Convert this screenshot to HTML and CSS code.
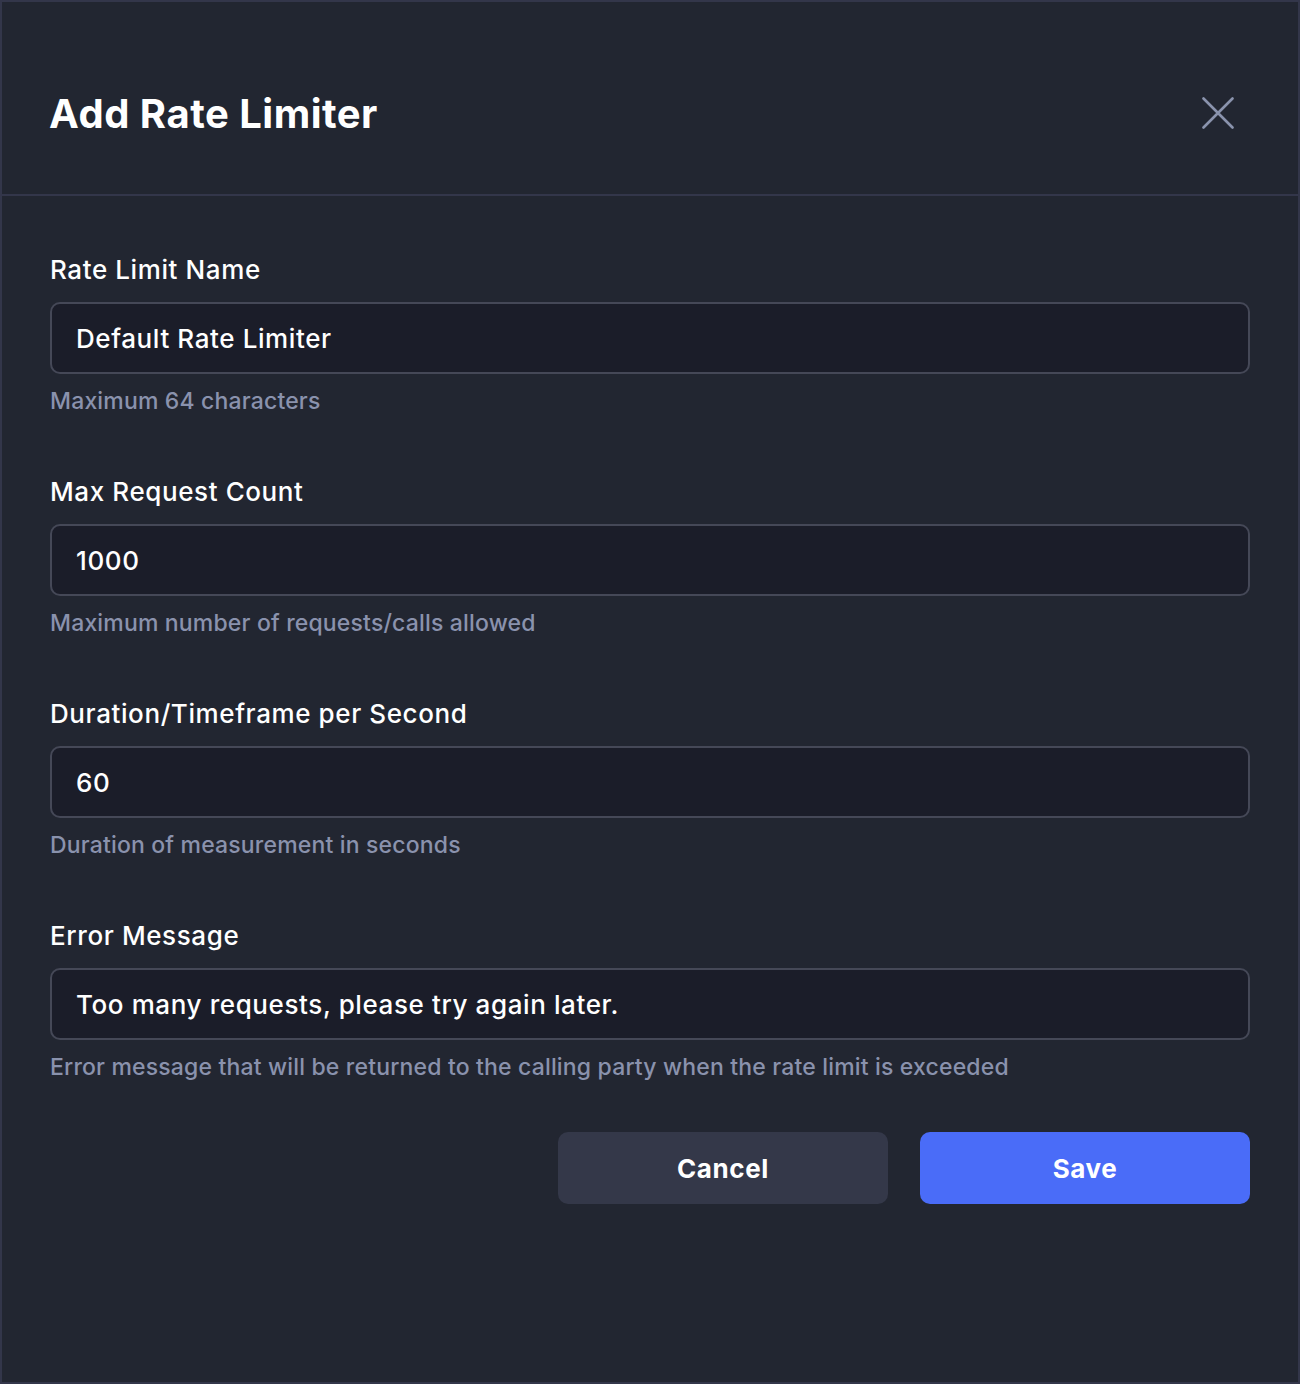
FILE: index.html
```html
<!DOCTYPE html>
<html>
<head>
<meta charset="utf-8">
<link rel="stylesheet" href="styles.css">
</head>
<body>
<div class="modal">
  <header class="header">
    <h1 class="title">Add Rate Limiter</h1>
    <button class="close" aria-label="Close">
      <svg width="32" height="32" viewBox="0 0 32 32"><path d="M1.5 1.5L30.5 30.5M30.5 1.5L1.5 30.5" stroke="#8a93ad" stroke-width="2.6" stroke-linecap="round" fill="none"/></svg>
    </button>
  </header>
  <div class="body">
    <div class="field">
      <label class="label">Rate Limit Name</label>
      <div class="input">Default Rate Limiter</div>
      <div class="hint">Maximum 64 characters</div>
    </div>
    <div class="field">
      <label class="label">Max Request Count</label>
      <div class="input">1000</div>
      <div class="hint">Maximum number of requests/calls allowed</div>
    </div>
    <div class="field">
      <label class="label">Duration/Timeframe per Second</label>
      <div class="input">60</div>
      <div class="hint">Duration of measurement in seconds</div>
    </div>
    <div class="field">
      <label class="label">Error Message</label>
      <div class="input">Too many requests, please try again later.</div>
      <div class="hint">Error message that will be returned to the calling party when the rate limit is exceeded</div>
    </div>
    <div class="actions">
      <button class="btn btn-cancel">Cancel</button>
      <button class="btn btn-save">Save</button>
    </div>
  </div>
</div>
</body>
</html>
```
FILE: styles.css
```css
* { box-sizing: border-box; }
html, body { margin: 0; padding: 0; }
body {
  width: 1300px;
  height: 1384px;
  background: #222631;
  font-family: Inter, "Noto Sans", sans-serif;
}
.modal {
  width: 1300px;
  height: 1384px;
  border: 2px solid #33364a;
  background: #222631;
}
.header {
  height: 194px;
  border-bottom: 2px solid #33364a;
  display: flex;
  align-items: center;
  justify-content: space-between;
  padding: 30px 64px 0 47px;
}
.title {
  margin: 0;
  color: #ffffff;
  font-size: 40px;
  font-weight: 700;
  letter-spacing: 0.5px;
}
.close {
  background: none;
  border: 0;
  padding: 0;
  width: 32px;
  height: 32px;
  display: flex;
}
.body {
  padding: 58px 48px 0 48px;
}
.field {
  display: flex;
  flex-direction: column;
  margin-bottom: 60px;
}
.label {
  color: #ffffff;
  font-size: 26px;
  font-weight: 500;
  line-height: 32px;
  letter-spacing: 0.6px;
  margin-bottom: 16px;
}
.input {
  height: 72px;
  border: 2px solid #454857;
  border-radius: 10px;
  background: #1b1d29;
  color: #ffffff;
  font-size: 26px;
  font-weight: 500;
  letter-spacing: 0.6px;
  display: flex;
  align-items: center;
  padding: 0 24px;
}
.hint {
  color: #8a92ad;
  font-size: 23px;
  font-weight: 500;
  line-height: 30px;
  letter-spacing: 0.17px;
  margin-top: 12px;
}
.actions {
  display: flex;
  justify-content: flex-end;
  gap: 32px;
  margin-top: -10px;
}
.btn {
  width: 330px;
  height: 72px;
  border: 0;
  border-radius: 10px;
  color: #ffffff;
  font-family: Inter, "Noto Sans", sans-serif;
  font-size: 26px;
  font-weight: 700;
  letter-spacing: 0.6px;
}
.btn-cancel { background: #343849; }
.btn-save { background: #4a6cf8; }
```
